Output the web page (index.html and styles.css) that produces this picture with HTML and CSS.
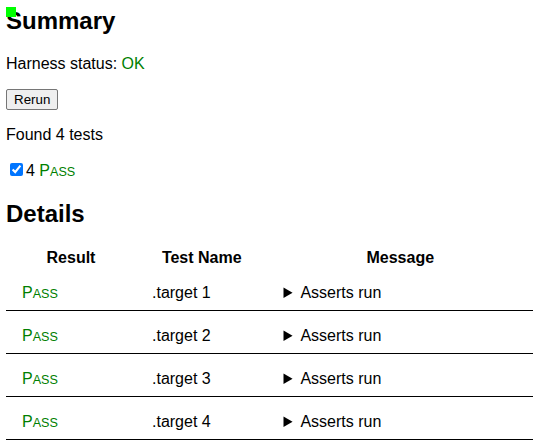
FILE: index.html
```html
<!DOCTYPE html>
<html>
<head>
<meta charset="utf-8">
<title>Test results</title>
<link rel="stylesheet" href="styles.css">
</head>
<body>
<div class="marker"></div>
<div id="log">
  <section class="summary">
    <h2 class="first">Summary</h2>
    <p>Harness status: <span class="ok">OK</span></p>
    <p><button class="rerun">Rerun</button></p>
    <p>Found 4 tests</p>
    <div><label><input type="checkbox" checked>4 <span class="pass">P<span class="sc">ass</span></span></label></div>
  </section>
  <h2>Details</h2>
  <table class="results">
    <thead>
      <tr><th>Result</th><th>Test Name</th><th>Message</th></tr>
    </thead>
    <tbody>
      <tr class="row-pass"><td>P<span class="sc">ass</span></td><td>.target 1</td><td><details><summary>Asserts run</summary></details></td></tr>
      <tr class="row-pass"><td>P<span class="sc">ass</span></td><td>.target 2</td><td><details><summary>Asserts run</summary></details></td></tr>
      <tr class="row-pass"><td>P<span class="sc">ass</span></td><td>.target 3</td><td><details><summary>Asserts run</summary></details></td></tr>
      <tr class="row-pass"><td>P<span class="sc">ass</span></td><td>.target 4</td><td><details><summary>Asserts run</summary></details></td></tr>
    </tbody>
  </table>
</div>
</body>
</html>
```
FILE: styles.css
```css
html {
  font-family: "Liberation Sans", Arial, sans-serif;
}
body {
  margin: 6px;
  font-size: 16px;
  color: #000;
  background: #fff;
}
.marker {
  position: absolute;
  left: 6px;
  top: 7px;
  width: 10px;
  height: 10px;
  background: #00ff00;
}
h2 {
  font-size: 24px;
  margin: 19.92px 0;
}
h2.first {
  margin-top: 1px;
}
p {
  margin: 16px 0;
}
.summary {
  margin-bottom: 16px;
}
.ok, .pass {
  color: green;
}
.sc {
  text-transform: uppercase;
  font-size: 12.6px;
}
.rerun {
  font-family: "Liberation Sans", Arial, sans-serif;
  font-size: 13.33px;
  background: #efefef;
  border: 1px solid #767676;
  border-radius: 2px;
  padding: 2px 7px;
  color: #000;
}
label input {
  margin: 3px 3px 3px 4px;
}
.results {
  border-collapse: collapse;
  table-layout: fixed;
  width: 100%;
}
.results th {
  padding: 1px;
  font-weight: bold;
}
.results th:first-child,
.results td:first-child {
  width: 8em;
}
.results th:last-child {
  width: 50%;
}
.results td {
  padding: 16px 16px 8px;
  border-bottom: 1px solid black;
}
.row-pass td:first-child {
  color: green;
}
.results details {
  display: block;
}
.results summary {
  cursor: pointer;
}
```
